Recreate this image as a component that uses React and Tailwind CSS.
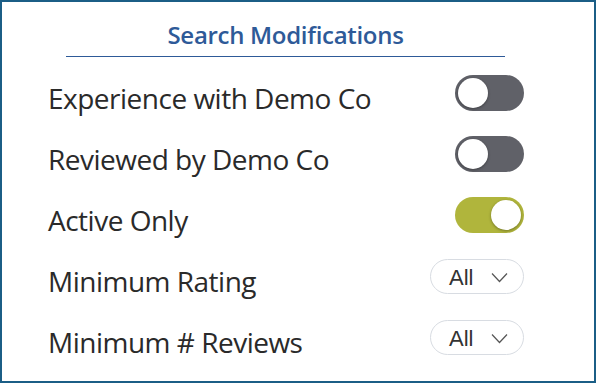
function Toggle({ on }) {
  return (
    <div
      className={`flex h-[36px] w-[69px] items-center rounded-full px-[3px] ${
        on ? 'justify-end bg-[#b0b53c]' : 'justify-start bg-[#606168]'
      }`}
    >
      <div className="h-[30px] w-[30px] rounded-full bg-white shadow-[0_1px_3px_rgba(0,0,0,0.35)]" />
    </div>
  );
}

function Select() {
  return (
    <div
      className="flex h-[35px] w-[94px] items-center rounded-full border border-[#d8dce2] bg-white pl-[18px] text-[22px] text-[#333]"
      style={{ fontFamily: '"Liberation Sans", Arial, sans-serif' }}
    >
      <span className="pt-[3px] leading-none">All</span>
      <svg className="ml-[18px] mt-[2px] h-[11px] w-[17px]" viewBox="0 0 17 11" fill="none" stroke="#555" strokeWidth="1.2">
        <path d="M1 1.5l7.5 8 7.5-8" />
      </svg>
    </div>
  );
}

const rows = [
  { label: 'Experience with Demo Co', control: <Toggle on={false} /> },
  { label: 'Reviewed by Demo Co', control: <Toggle on={false} /> },
  { label: 'Active Only', control: <Toggle on /> },
  { label: 'Minimum Rating', control: <Select /> },
  { label: 'Minimum # Reviews', control: <Select /> },
];

export default function App() {
  return (
    <div
      className="h-[383px] w-[596px] border-2 border-[#1b5e86] bg-white"
      style={{ fontFamily: '"Open Sans", "Noto Sans", sans-serif' }}
    >
      <div className="ml-[64px] mt-[20px] w-[439px] border-b border-[#2e5a98] pb-[8px] text-center text-[24px] font-semibold leading-[26px] tracking-[-0.3px] text-[#2e5a98]">
        Search Modifications
      </div>
      <div className="mt-[18px] flex flex-col gap-[25px] pl-[46px] pr-[70px]">
        {rows.map((r) => (
          <div key={r.label} className="flex h-[36px] items-center justify-between">
            <span className="pt-[10px] text-[28px] leading-none tracking-[-0.5px] text-[#2a2a2a]">{r.label}</span>
            {r.control}
          </div>
        ))}
      </div>
    </div>
  );
}
